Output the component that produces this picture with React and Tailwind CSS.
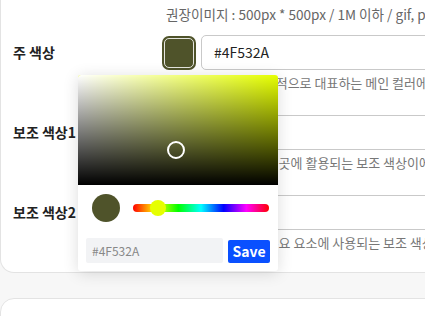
import React from 'react';

const font = { fontFamily: '"Noto Sans CJK KR", "Noto Sans", sans-serif' };

const rows = [
  { label: '주 색상', value: '#4F532A', help: '쇼핑몰을 전체적으로 대표하는 메인 컬러에요.' },
  { label: '보조 색상1', value: '#8A8F5C', help: '강조가 필요한 곳에 활용되는 보조 색상이에요.' },
  { label: '보조 색상2', value: '#D9DBC4', help: '화면의 여러 주요 요소에 사용되는 보조 색상이에요.' },
];

function Swatch({ color }) {
  return (
    <div className="w-[34px] h-[34px] shrink-0 rounded-[7px] p-[2px]" style={{ backgroundColor: color }}>
      <div className="w-full h-full rounded-[5px] border-[1.5px] border-white/85" />
    </div>
  );
}

function ColorRow({ label, value, help }) {
  return (
    <div className="flex flex-col">
      <div className="flex items-center h-[35px]">
        <div className="w-[149px] shrink-0 text-[14px] font-bold text-[#222]">{label}</div>
        <Swatch color={value} />
        <div className="ml-[5px] w-[400px] h-[35px] border border-[#c9c9c9] rounded-[5px] flex items-center px-[12px] text-[14px] text-[#222]">
          {value}
        </div>
      </div>
      <p className="ml-[188px] mt-[3px] h-[20px] leading-[20px] text-[13px] text-[#777] whitespace-nowrap">{help}</p>
    </div>
  );
}

function ColorPicker() {
  return (
    <div className="absolute left-[78px] top-[75px] w-[200px] h-[196px] bg-white rounded-[3px] shadow-[0_2px_16px_rgba(0,0,0,0.14)] flex flex-col">
      {/* saturation / value area */}
      <div className="relative h-[110px] rounded-t-[3px] bg-[#e6ff00] overflow-hidden">
        <div className="absolute inset-0 bg-linear-to-r from-white to-transparent" />
        <div className="absolute inset-0 bg-linear-to-t from-black to-transparent" />
        <div className="absolute left-[89px] top-[66px] w-[18px] h-[18px] rounded-full border-2 border-white" />
      </div>

      <div className="flex items-center pl-[14px] pr-[9px] mt-[9px]">
        <div className="w-[28px] h-[28px] rounded-full bg-[#4F532A] shrink-0" />
        <div className="relative ml-[13px] flex-1 h-[8px] rounded-full bg-[linear-gradient(to_right,#f00,#ff0,#0f0,#0ff,#00f,#f0f,#f00)]">
          <div className="absolute left-[17px] top-[-4px] w-[16px] h-[16px] rounded-full bg-[#e6ff00]" />
        </div>
      </div>

      <div className="flex items-end gap-[5px] px-[8px] mt-auto pb-[8px]">
        <div className="w-[137px] h-[25px] bg-[#f2f3f5] rounded-[2px] flex items-center px-[6px] text-[12px] text-[#888]">
          #4F532A
        </div>
        <button className="w-[42px] h-[23px] bg-[#0a50ff] text-white text-[14px] font-bold rounded-[2px] flex items-center justify-center">
          Save
        </button>
      </div>
    </div>
  );
}

export default function App() {
  return (
    <div className="relative w-[425px] h-[316px] overflow-hidden bg-[#f7f7f7]" style={font}>
      <div className="w-[640px] bg-white border border-t-0 border-[#e3e3e3] rounded-b-[14px] pl-[12px] pb-[19px]">
        <p className="pl-[153px] pt-[4px] h-[35px] leading-[20px] text-[13.6px] text-[#666] whitespace-nowrap">
          권장이미지 : 500px * 500px / 1M 이하 / gif, png, jpg
        </p>
        <div className="flex flex-col gap-[22px]">
          {rows.map((r) => (
            <ColorRow key={r.label} {...r} />
          ))}
        </div>
      </div>
      <div className="mt-[25px] w-[640px] h-[40px] bg-white border border-[#e3e3e3] rounded-t-[14px]" />
      <ColorPicker />
    </div>
  );
}
